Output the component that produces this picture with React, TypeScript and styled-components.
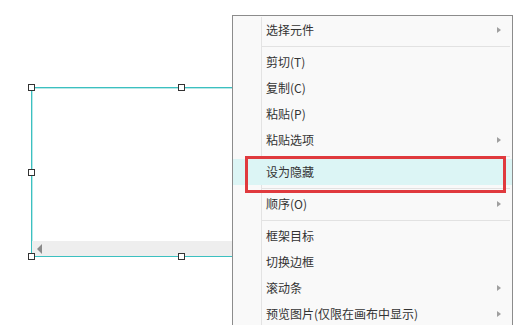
import styled, { createGlobalStyle } from "styled-components";

const GlobalStyle = createGlobalStyle`
  html, body {
    margin: 0;
    padding: 0;
    background: #ffffff;
  }
`;

const Canvas = styled.div`
  position: relative;
  width: 514px;
  height: 325px;
  overflow: hidden;
  background: #ffffff;
  font-family: "Noto Sans CJK SC", "Microsoft YaHei", sans-serif;
`;

const Frame = styled.div`
  position: absolute;
  left: 31px;
  top: 87px;
  width: 260px;
  height: 170px;
  box-sizing: border-box;
  border: 1px solid #3cc0c0;
  box-shadow: inset 1px 1px 0 #b8e8e8;
  display: flex;
  flex-direction: column;
  justify-content: flex-end;
`;

const ScrollBar = styled.div`
  height: 15px;
  background: #eeeeee;
  display: flex;
  align-items: center;
  padding-left: 5px;

  &::before {
    content: "";
    width: 0;
    height: 0;
    border-right: 5px solid #8a8a8a;
    border-top: 5px solid transparent;
    border-bottom: 5px solid transparent;
  }
`;

const Handle = styled.span<{ $x: number; $y: number }>`
  position: absolute;
  left: ${(p) => p.$x}px;
  top: ${(p) => p.$y}px;
  width: 7px;
  height: 7px;
  box-sizing: border-box;
  background: #ffffff;
  border: 1px solid #333333;
`;

const Menu = styled.div`
  position: absolute;
  left: 232px;
  top: 15px;
  width: 281px;
  padding-top: 1px;
  box-sizing: border-box;
  background: #f9f9f9;
  border: 1px solid #8c8c8c;
  display: flex;
  flex-direction: column;
`;

const Item = styled.div<{ $active?: boolean }>`
  display: grid;
  grid-template-columns: 29px 1fr 15px;
  height: 26px;
  align-items: stretch;
  background: ${(p) => (p.$active ? "#dcf5f5" : "transparent")};
  color: #333333;
  font-size: 12px;
`;

const IconCell = styled.div<{ $active?: boolean }>`
  border-right: 1px solid ${(p) => (p.$active ? "transparent" : "#e3e3e3")};
`;

const Label = styled.div`
  display: flex;
  align-items: center;
  padding-left: 4px;
  white-space: nowrap;
  line-height: 1;
`;

const Arrow = styled.div`
  display: flex;
  align-items: center;

  &::before {
    content: "";
    width: 0;
    height: 0;
    border-left: 4px solid #a0a0a0;
    border-top: 3.5px solid transparent;
    border-bottom: 3.5px solid transparent;
  }
`;

const Separator = styled.div`
  display: grid;
  grid-template-columns: 29px 1fr;
  height: 6px;
`;

const SepLine = styled.div`
  align-self: center;
  height: 1px;
  margin-right: 2px;
  background: #e2e2e2;
`;

const Callout = styled.div`
  position: absolute;
  left: 245px;
  top: 156px;
  width: 261px;
  height: 37px;
  box-sizing: border-box;
  border: 3px solid #e03a3e;
`;

type Entry = { label: string; sub?: boolean; active?: boolean } | "sep";

const entries: Entry[] = [
  { label: "选择元件", sub: true },
  "sep",
  { label: "剪切(T)" },
  { label: "复制(C)" },
  { label: "粘贴(P)" },
  { label: "粘贴选项", sub: true },
  "sep",
  { label: "设为隐藏", active: true },
  "sep",
  { label: "顺序(O)", sub: true },
  "sep",
  { label: "框架目标" },
  { label: "切换边框" },
  { label: "滚动条", sub: true },
  { label: "预览图片(仅限在画布中显示)", sub: true },
];

export default function App() {
  return (
    <Canvas>
      <GlobalStyle />
      <Frame>
        <ScrollBar />
        <Handle $x={-4} $y={-4} />
        <Handle $x={146} $y={-4} />
        <Handle $x={-4} $y={81} />
        <Handle $x={-4} $y={165} />
        <Handle $x={146} $y={165} />
      </Frame>
      <Menu>
        {entries.map((e, i) =>
          e === "sep" ? (
            <Separator key={i}>
              <IconCell />
              <SepLine />
            </Separator>
          ) : (
            <Item key={i} $active={e.active}>
              <IconCell $active={e.active} />
              <Label>{e.label}</Label>
              {e.sub ? <Arrow /> : <div />}
            </Item>
          )
        )}
      </Menu>
      <Callout />
    </Canvas>
  );
}
